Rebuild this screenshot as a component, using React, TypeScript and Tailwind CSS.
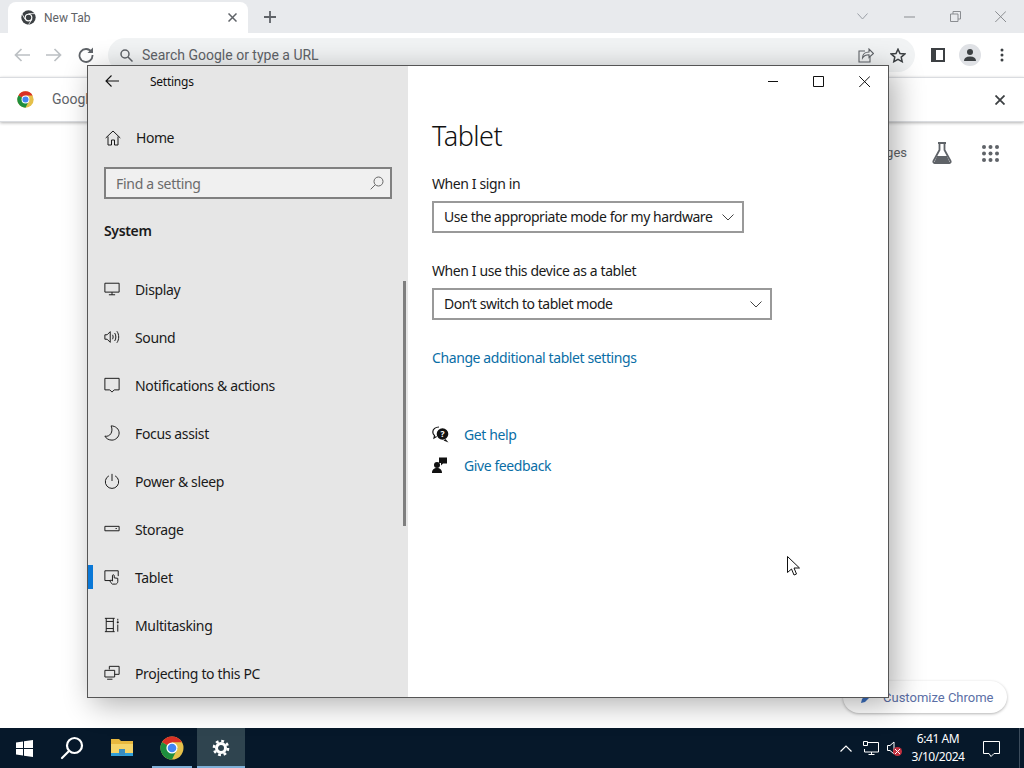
import React from "react";

const S = ({ children }: { children: React.ReactNode }) => (
  <svg width={16} height={16} viewBox="0 0 18 18" fill="none" stroke="#1a1a1a" strokeWidth={1.1}>
    {children}
  </svg>
);

const ChromeLogo = ({ size = 18 }: { size?: number }) => (
  <svg width={size} height={size} viewBox="0 0 24 24">
    <circle cx="12" cy="12" r="11.5" fill="#e5c04a" />
    <path d="M12 12L2.04 6.25A11.5 11.5 0 0 1 21.96 6.25H12Z" fill="#d93025" />
    <path d="M12 12L2.04 6.25A11.5 11.5 0 0 0 12 23.5L17.75 12Z" fill="#1e8e3e" />
    <circle cx="12" cy="12" r="5.6" fill="#fff" />
    <circle cx="12" cy="12" r="4.3" fill="#4285f4" />
  </svg>
);

const MonoChrome = () => (
  <svg width="15" height="15" viewBox="0 0 24 24">
    <circle cx="12" cy="12" r="11.5" fill="#3c4043" />
    <circle cx="12" cy="12" r="6.2" fill="#fff" />
    <circle cx="12" cy="12" r="4.3" fill="#3c4043" />
    <path d="M12 5.8H22M6.6 15L1.8 6.5M17.4 15L12 23.5" stroke="#fff" strokeWidth="1.3" />
  </svg>
);

const navIcons: Record<string, React.ReactNode> = {
  Display: <S><path d="M1 2.500h16v10H1zM9 12.500v3M5.500 15.500h7" /></S>,
  Sound: <S><path d="M1 6.500h2.500L7 3v12l-3.500-3.500H1zM9.500 6.500c1 1.500 1 3.500 0 5M12 4.500c1.800 2.700 1.800 6.300 0 9M14.500 2.500c2.700 3.800 2.700 9.200 0 13" /></S>,
  "Notifications & actions": <S><path d="M1 1.500h16v13h-5.500L9 17l-2.500-2.500H1z" /></S>,
  "Focus assist": <S><path d="M8 1c5 0 9 3.500 9 8s-4 8-8 8c-3.500 0-6.500-1.500-8-4.500C6.500 14 11 7.500 8 1z" /></S>,
  "Power & sleep": <S><path d="M9 1v8M5.500 3.200a7.500 7.500 0 1 0 7 0" /></S>,
  Storage: <S><path d="M1 6h16v5H1zM13 8.500h1.500" /></S>,
  Tablet: <S><path d="M7 13H1V2h15v6" /><path d="M9.500 17c-1.500-1-2.500-2.500-3-4l1.500-.5 1.500 1V7.500a1 1 0 0 1 2 0V10l4 .5V14c0 1.500-1 3-2.500 3z" /></S>,
  Multitasking: <S><path d="M1 1.500h11M1 16.500h11M2.500 1.500V16.500M10.500 1.500V16.500M2.500 5h8M2.500 13h8M15.500 2v2M15.500 8.500V16.500" /><circle cx="15.500" cy="6" r="1.200" fill="#1a1a1a" stroke="none" /></S>,
  "Projecting to this PC": <S><path d="M6 5V1.500h11v9h-5M1 6h11v7.500H1zM3.500 16h6" /></S>,
};

const NavItem = ({ label, active }: { label: string; active?: boolean }) => (
  <div className="relative flex h-[48px] items-center pl-[16px]">
    {active && <div className="absolute left-0 top-[12px] h-[24px] w-[5px] bg-[#0a78d7]" />}
    <span className="flex w-[31px] shrink-0">{navIcons[label]}</span>
    <span className="whitespace-nowrap text-[14px] tracking-[-0.35px] text-[#1a1a1a]">{label}</span>
  </div>
);

const Select = ({ text, w }: { text: string; w: string }) => (
  <div className={`flex h-[32px] items-center justify-between border-2 border-[#999999] pl-[10px] pr-[8px] ${w}`}>
    <span className="whitespace-nowrap pb-[1px] text-[14px] tracking-[-0.45px] text-[#1a1a1a]">{text}</span>
    <svg width="12" height="7" viewBox="0 0 12 7" fill="none" stroke="#444" strokeWidth="1"><path d="M.5.5L6 6l5.500-5.500" /></svg>
  </div>
);

const SettingsWindow = () => (
  <div className="absolute left-[87px] top-[65px] z-20 flex h-[633px] w-[802px] border border-[#555] bg-white font-['Noto_Sans',sans-serif] shadow-[6px_6px_28px_rgba(0,0,0,0.32)]">
    <aside className="relative flex w-[320px] shrink-0 flex-col overflow-hidden bg-[#e6e6e6]">
      <div className="flex h-[31px] items-center pl-[17px]">
        <svg width="14" height="12" viewBox="0 0 14 12" fill="none" stroke="#111" strokeWidth="1.100"><path d="M14 6H1M6.500.500L1 6l5.500 5.500" /></svg>
        <span className="ml-[31px] pt-[2px] text-[12px] tracking-[-0.25px] text-[#111]">Settings</span>
      </div>
      <div className="mt-[17px] flex h-[48px] items-center pl-[17px]">
        <span className="flex w-[31px]">
          <svg width="16" height="16" viewBox="0 0 16 16" fill="none" stroke="#1a1a1a"><path d="M.7 8L8 1l7.300 7M3 6.500v8.500h3.500v-5h3v5H13V6.500" /></svg>
        </span>
        <span className="text-[14px] tracking-[-0.45px] text-[#1a1a1a]">Home</span>
      </div>
      <div className="mx-[16px] mt-[6px] flex h-[32px] items-center justify-between border-2 border-[#808080] bg-[#f0f0f0] pl-[10px] pr-[6px]">
        <span className="text-[14px] tracking-[-0.3px] text-[#6b6b6b]">Find a setting</span>
        <svg width="14" height="14" viewBox="0 0 14 14" fill="none" stroke="#666" strokeWidth="1"><circle cx="8.500" cy="5.500" r="4.500" /><path d="M5.200 8.800L.7 13.300" /></svg>
      </div>
      <div className="mt-[20px] flex h-[22px] items-center pl-[16px] text-[14px] font-semibold tracking-[-0.35px] text-[#1a1a1a]">System</div>
      <div className="mt-[24px]">
        {["Display", "Sound", "Notifications & actions", "Focus assist", "Power & sleep", "Storage", "Tablet", "Multitasking", "Projecting to this PC"].map((l) => (
          <NavItem key={l} label={l} active={l === "Tablet"} />
        ))}
      </div>
      <div className="absolute right-[2px] top-[215px] h-[245px] w-[3px] bg-[#7f7f7f]" />
    </aside>
    <main className="flex min-w-0 flex-1 flex-col">
      <div className="flex h-[30px] justify-end pr-[1px]">
        {[
          <path key="a" d="M0 5.500h10" />,
          <path key="b" d="M.5.500h10v10H.5z" />,
          <path key="c" d="M.3.300L11 11M11 .3L.3 11" />,
        ].map((p, i) => (
          <div key={i} className={`flex items-center justify-center ${i === 0 ? "w-[44px]" : "w-[46px]"}`}>
            <svg width="11" height="11" viewBox="0 0 11 11" fill="none" stroke="#111" strokeWidth="1">{p}</svg>
          </div>
        ))}
      </div>
      <div className="flex flex-col pl-[24px]">
        <h1 className="mt-[21px] h-[40px] text-[27px] font-light leading-[38px] tracking-[-0.5px] text-[#111]">Tablet</h1>
        <div className="mt-[17px] h-[20px] text-[14px] leading-[20px] tracking-[-0.4px] text-[#1a1a1a]">When I sign in</div>
        <div className="mt-[7px]"><Select text="Use the appropriate mode for my hardware" w="w-[312px]" /></div>
        <div className="mt-[28px] h-[20px] text-[14px] leading-[20px] tracking-[-0.4px] text-[#1a1a1a]">When I use this device as a tablet</div>
        <div className="mt-[7px]"><Select text="Don’t switch to tablet mode" w="w-[340px]" /></div>
        <div className="mt-[28px] h-[20px] text-[14px] leading-[20px] tracking-[-0.4px] text-[#0a6ea6]">Change additional tablet settings</div>
        <div className="mt-[56px] flex h-[20px] items-center">
          <span className="flex w-[32px]">
            <svg width="17" height="17" viewBox="0 0 17 17"><path d="M7 1C3.500 1 .8 3 .8 6c0 1.500.7 2.700 1.700 3.500L2 12l2.600-1.500" fill="none" stroke="#111" strokeWidth="1.200" /><circle cx="10.500" cy="8" r="5.800" fill="#111" /><path d="M13.500 13l3 3.500-5-2z" fill="#111" /><text x="10.500" y="11" textAnchor="middle" fontSize="8.500" fontWeight="700" fill="#fff">?</text></svg>
          </span>
          <span className="text-[14px] tracking-[-0.4px] text-[#0a6ea6]">Get help</span>
        </div>
        <div className="mt-[11px] flex h-[20px] items-center">
          <span className="flex w-[32px]">
            <svg width="16" height="16" viewBox="0 0 16 16" fill="#111"><circle cx="5" cy="8" r="3" /><path d="M0 16c0-3.500 2-5 5-5s5 1.500 5 5zM7 .5h8v6h-4l-2 2v-2.500H7z" /></svg>
          </span>
          <span className="text-[14px] tracking-[-0.4px] text-[#0a6ea6]">Give feedback</span>
        </div>
      </div>
    </main>
  </div>
);

const ChromeBrowser = () => (
  <div className="flex h-[728px] flex-col bg-white font-['Roboto',sans-serif]">
    <div className="flex h-[33px] items-end bg-[#e8eaed] pl-[8px]">
      <div className="flex h-[31px] w-[240px] items-center rounded-t-[8px] bg-white pl-[13px] pr-[11px]">
        <MonoChrome />
        <span className="ml-[8px] flex-1 text-[12px] text-[#5f6368]">New Tab</span>
        <svg width="9" height="9" viewBox="0 0 9 9" stroke="#5f6368" strokeWidth="1.500"><path d="M.5.5l8 8M8.500.5l-8 8" /></svg>
      </div>
      <div className="flex h-[33px] w-[44px] items-center justify-center">
        <svg width="12" height="12" viewBox="0 0 12 12" stroke="#5f6368" strokeWidth="1.800"><path d="M6 0v12M0 6h12" /></svg>
      </div>
      <div className="ml-auto flex h-[33px] items-center">
        <span className="flex w-[46px] justify-center pr-[2px]">
          <svg width="11" height="7" viewBox="0 0 11 7" fill="none" stroke="#9aa0a6"><path d="M.5.5l5 5.500 5-5.500" /></svg>
        </span>
        <span className="flex w-[46px] justify-center">
          <svg width="11" height="2" viewBox="0 0 11 2" stroke="#8a8d91"><path d="M0 1h11" /></svg>
        </span>
        <span className="flex w-[46px] justify-center">
          <svg width="11" height="11" viewBox="0 0 11 11" fill="none" stroke="#8a8d91"><path d="M.5 3h7.500v7.500H.5zM3 3V.5h7.500V8H8" /></svg>
        </span>
        <span className="flex w-[46px] justify-center pr-[1px]">
          <svg width="11" height="11" viewBox="0 0 11 11" fill="none" stroke="#8a8d91"><path d="M.3.3L11 11M11 .3L.3 11" /></svg>
        </span>
      </div>
    </div>
    <div className="flex h-[44px] items-center bg-white pl-[14px] pr-[20px]">
      <svg width="16" height="14" viewBox="0 0 16 14" fill="none" stroke="#bcc0c4" strokeWidth="1.700"><path d="M16 7H2M7.500 1L1.500 7l6 6" /></svg>
      <svg className="ml-[16px]" width="16" height="14" viewBox="0 0 16 14" fill="none" stroke="#bcc0c4" strokeWidth="1.700"><path d="M0 7h14M8.500 1l6 6-6 6" /></svg>
      <svg className="ml-[16px]" width="16" height="16" viewBox="0 0 16 16" fill="none" stroke="#5f6368" strokeWidth="1.800"><path d="M13.500 5A6.500 6.500 0 1 0 14.500 8" /><path d="M15 0.500V6H9.500z" fill="#5f6368" stroke="none" /></svg>
      <div className="ml-[14px] flex h-[34px] flex-1 items-center rounded-full bg-[#f1f3f4] pl-[12px]">
        <svg width="13" height="13" viewBox="0 0 13 13" fill="none" stroke="#5f6368" strokeWidth="1.500"><circle cx="5" cy="5" r="4" /><path d="M8 8l4.500 4.500" /></svg>
        <span className="ml-[9px] flex-1 text-[14px] text-[#5f6368]">Search Google or type a URL</span>
        <svg width="16" height="15" viewBox="0 0 16 15" fill="none" stroke="#5f6368" strokeWidth="1.100"><path d="M7 3H1v11h11V9" /><path d="M4.500 10c0-4 3-6 6.500-6V1l4.500 4.500L11 9.500V6.800c-2.500 0-5 .8-6.500 3.200z" /></svg>
        <svg className="ml-[16px] mr-[9px]" width="16" height="15" viewBox="0 0 16 15" fill="none" stroke="#3c4043" strokeWidth="1.500"><path d="M8 1.200l2 4.300 4.800.5-3.600 3.100 1 4.600L8 11.400l-4.200 2.300 1-4.600L1.200 6l4.800-.5z" /></svg>
      </div>
      <span className="ml-[16px] flex h-[14px] w-[14px] border-2 border-[#3c4043] bg-[#3c4043]"><span className="ml-auto h-full w-[7px] bg-white" /></span>
      <span className="ml-[14px] flex h-[22px] w-[22px] items-center justify-center rounded-full bg-[#dfe1e5]">
        <svg width="12" height="12" viewBox="0 0 12 12" fill="#3c4043"><circle cx="6" cy="3" r="3" /><path d="M0 12c0-3 2-4.500 6-4.500s6 1.500 6 4.500z" /></svg>
      </span>
      <svg className="ml-[19px]" width="4" height="14" viewBox="0 0 4 14" fill="#3c4043"><circle cx="2" cy="2" r="1.500" /><circle cx="2" cy="7" r="1.500" /><circle cx="2" cy="12" r="1.500" /></svg>
    </div>
    <div className="z-10 flex h-[45px] items-center border-y border-y-[#dadce0] bg-white pl-[17px] pr-[19px] shadow-[0_1px_3px_rgba(0,0,0,0.3)]">
      <ChromeLogo size={17} />
      <span className="ml-[18px] flex-1 text-[14px] text-[#5f6368]">Google</span>
      <svg width="10" height="10" viewBox="0 0 10 10" stroke="#3c4043" strokeWidth="1.800"><path d="M.5.5l9 9M9.500.5l-9 9" /></svg>
    </div>
    <div className="flex min-h-0 flex-1 flex-col items-end justify-between pb-[15px] pr-[17px] pt-[19px]">
      <div className="mr-[8px] flex h-[24px] items-center">
        <span className="text-[13px] text-[#5f6368]">Images</span>
        <svg className="ml-[25px]" width="20" height="22" viewBox="0 0 20 22" fill="none" stroke="#5f6368" strokeWidth="1.800"><path d="M6 1h8M7.500 1v7L1.500 19c-.5 1 0 2 1 2h15c1 0 1.500-1 1-2L12.500 8V1" /><path d="M5 14h10l2.500 6h-15z" fill="#5f6368" stroke="none" /></svg>
        <svg className="ml-[30px]" width="17" height="17" viewBox="0 0 17 17" fill="#5f6368">
          {[2, 8.5, 15].flatMap((y) => [2, 8.5, 15].map((x) => <circle key={`${x}-${y}`} cx={x} cy={y} r="2" />))}
        </svg>
      </div>
      <div className="flex h-[32px] w-[164px] items-center rounded-full bg-white pl-[18px] shadow-[0_1px_3px_rgba(0,0,0,0.3)]">
        <svg width="11" height="11" viewBox="0 0 11 11" fill="#3b6fc0"><path d="M0 11l1-4 6-6 3 3-6 6z" /></svg>
        <span className="ml-[11px] pt-[2px] text-[13px] text-[#5b6fa6]">Customize Chrome</span>
      </div>
    </div>
  </div>
);

const Taskbar = () => (
  <div className="flex h-[40px] items-center bg-[#06182a] font-['Noto_Sans',sans-serif] text-white">
    <span className="flex w-[48px] justify-center">
      <svg width="17" height="17" viewBox="0 0 17 17" fill="#fff"><path d="M0 2.500l7-1v6.500H0zM8 1.300L17 0v8H8zM0 9h7v6.500l-7-1zM8 9h9v8l-9-1.300z" /></svg>
    </span>
    <span className="flex w-[48px] justify-center">
      <svg width="24" height="24" viewBox="0 0 24 24" fill="none" stroke="#fff" strokeWidth="2.200"><circle cx="14.500" cy="9.500" r="7.500" /><path d="M9 15l-7 7" strokeLinecap="round" /></svg>
    </span>
    <span className="flex w-[52px] justify-center">
      <svg width="22" height="20" viewBox="0 0 22 20"><path d="M0 1h8l2 2h12v15H0z" fill="#e8b83e" /><path d="M0 6h22v12H0z" fill="#f5d469" /><path d="M0 15h22v3H0z" fill="#2f9ed8" /><path d="M8 11h6v6H8z" fill="#3a8dc0" /></svg>
    </span>
    <span className="relative ml-[4px] flex h-full w-[40px] items-center justify-center">
      <ChromeLogo size={24} />
      <span className="absolute bottom-0 left-0 right-0 h-[2px] bg-[#7fb0d8]" />
    </span>
    <span className="relative ml-[5px] flex h-full w-[48px] items-center justify-center bg-[#2f444f]">
      <svg width="18" height="18" viewBox="0 0 18 18" fill="none" stroke="#fff"><circle cx="9" cy="9" r="4.500" strokeWidth="3" /><circle cx="9" cy="9" r="7" strokeWidth="2.600" strokeDasharray="2.800 2.700" /></svg>
      <span className="absolute bottom-0 left-0 right-0 h-[2px] bg-[#7fb0d8]" />
    </span>
    <div className="ml-auto flex h-full items-center">
      <svg width="12" height="7" viewBox="0 0 12 7" fill="none" stroke="#fff" strokeWidth="1.200"><path d="M.5 6.500L6 1l5.500 5.500" /></svg>
      <svg className="ml-[11px]" width="16" height="14" viewBox="0 0 16 14" fill="none" stroke="#fff"><path d="M4 1.500h11.500V11H1.500V8M8.500 11v2.500M5.500 13.500h6M.5.500h4v4h-4z" /></svg>
      <span className="relative ml-[8px] flex h-[14px] w-[14px]">
        <svg width="9" height="14" viewBox="0 0 9 14" fill="none" stroke="#fff"><path d="M.5 4.500h2.500L7 1v12L3 9.500H.5z" /></svg>
        <span className="absolute left-[6px] top-[6px] flex h-[9px] w-[9px] items-center justify-center rounded-full bg-[#c4303f]">
          <svg width="5" height="5" viewBox="0 0 5 5" stroke="#fff"><path d="M0 0l5 5M5 0L0 5" /></svg>
        </span>
      </span>
      <div className="ml-[3px] flex w-[68px] flex-col items-center text-[12px] leading-[18px] tracking-[-0.45px]">
        <span>6:41 AM</span>
        <span>3/10/2024</span>
      </div>
      <svg className="ml-[11px]" width="17" height="17" viewBox="0 0 17 17" fill="none" stroke="#fff"><path d="M.5 1.500h16v12h-5.500L8 16.500 6 13.500H.5z" /></svg>
      <div className="ml-[19px] mr-[4px] h-full w-px bg-[#3c4c5c]" />
    </div>
  </div>
);

export default function App() {
  return (
    <div className="relative h-[768px] w-[1024px] overflow-hidden">
      <ChromeBrowser />
      <Taskbar />
      <SettingsWindow />
      <svg className="absolute left-[787px] top-[556px] z-30" width="13" height="20" viewBox="0 0 13 20" fill="#fff" stroke="#111"><path d="M.5.5v16l4-3.500 2.500 6 2.500-1-2.500-6h5.500z" /></svg>
    </div>
  );
}
